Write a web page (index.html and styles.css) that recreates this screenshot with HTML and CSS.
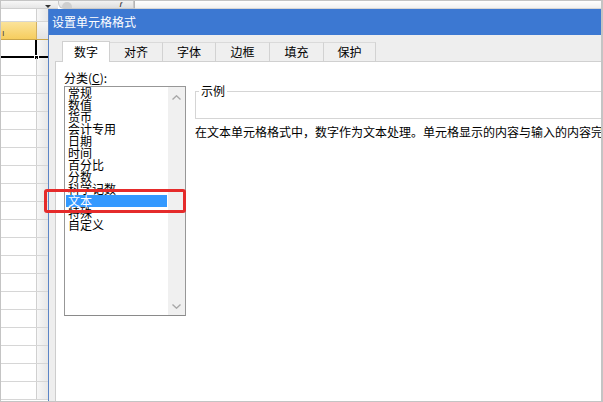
FILE: index.html
```html
<!DOCTYPE html>
<html lang="zh-CN">
<head>
<meta charset="utf-8">
<title>设置单元格格式</title>
<link rel="stylesheet" href="styles.css">
</head>
<body>
<div class="screen">
  <div class="topbar">
    <div class="namebox"><span class="drop"></span></div>
    <div class="fxbox"><span class="dot"></span><span class="fx">f</span></div>
    <div class="formula"></div>
  </div>
  <div class="main">
    <div class="sheet">
      <div class="row r0"><div class="ca"></div><div class="cb"></div></div>
      <div class="row hdr"><div class="ca"><span class="colmark">ı</span></div><div class="cb"></div></div>
      <div class="row act"><div class="ca"><span class="handle"></span></div><div class="cb"></div></div>
      <div class="row"><div class="ca"></div><div class="cb"></div></div>
      <div class="row"><div class="ca"></div><div class="cb"></div></div>
      <div class="row"><div class="ca"></div><div class="cb"></div></div>
      <div class="row"><div class="ca"></div><div class="cb"></div></div>
      <div class="row"><div class="ca"></div><div class="cb"></div></div>
      <div class="row"><div class="ca"></div><div class="cb"></div></div>
      <div class="row"><div class="ca"></div><div class="cb"></div></div>
      <div class="row"><div class="ca"></div><div class="cb"></div></div>
      <div class="row"><div class="ca"></div><div class="cb"></div></div>
      <div class="row"><div class="ca"></div><div class="cb"></div></div>
      <div class="row"><div class="ca"></div><div class="cb"></div></div>
      <div class="row"><div class="ca"></div><div class="cb"></div></div>
      <div class="row"><div class="ca"></div><div class="cb"></div></div>
      <div class="row"><div class="ca"></div><div class="cb"></div></div>
      <div class="row"><div class="ca"></div><div class="cb"></div></div>
      <div class="row"><div class="ca"></div><div class="cb"></div></div>
      <div class="row"><div class="ca"></div><div class="cb"></div></div>
      <div class="row"><div class="ca"></div><div class="cb"></div></div>
      <div class="row"><div class="ca"></div><div class="cb"></div></div>
    </div>
    <div class="dialog">
      <div class="titlebar">设置单元格格式</div>
      <div class="dbody">
        <div class="tabs">
          <div class="tab active">数字</div>
          <div class="tab w53">对齐</div>
          <div class="tab w53">字体</div>
          <div class="tab w54">边框</div>
          <div class="tab w54">填充</div>
          <div class="tab w52">保护</div>
        </div>
        <div class="panel">
          <div class="leftcol">
            <div class="lbl">分类(<u>C</u>):</div>
            <div class="listbox">
              <ul class="items">
                <li>常规</li>
                <li>数值</li>
                <li>货币</li>
                <li>会计专用</li>
                <li>日期</li>
                <li>时间</li>
                <li>百分比</li>
                <li>分数</li>
                <li>科学记数</li>
                <li class="sel">文本</li>
                <li>特殊</li>
                <li>自定义</li>
              </ul>
              <div class="scroll">
                <svg class="chev" width="9" height="5" viewBox="0 0 9 5"><polyline points="0.5,4.5 4.5,0.8 8.5,4.5" fill="none" stroke="#a8a8a8" stroke-width="1.4"/></svg>
                <svg class="chev" width="9" height="5" viewBox="0 0 9 5"><polyline points="0.5,0.5 4.5,4.2 8.5,0.5" fill="none" stroke="#a8a8a8" stroke-width="1.4"/></svg>
              </div>
            </div>
          </div>
          <div class="rightcol">
            <fieldset class="sample"><legend>示例</legend><div class="sample-in"></div></fieldset>
            <p class="desc">在文本单元格格式中，数字作为文本处理。单元格显示的内容与输入的内容完全一致。</p>
          </div>
        </div>
      </div>
    </div>
  </div>
  <div class="highlight"></div>
</div>
</body>
</html>
```

FILE: styles.css
```css
* { box-sizing: border-box; }
html, body { margin: 0; padding: 0; background: #fff; }
body {
  font-family: "Noto Sans CJK SC", "Liberation Sans", sans-serif;
  font-size: 12px;
  color: #000;
}
.screen {
  position: relative;
  width: 603px;
  height: 402px;
  border: 1px solid #c4c4c4;
  border-right-width: 2px;
  overflow: hidden;
  display: flex;
  flex-direction: column;
}
/* top strip */
.topbar {
  height: 8px;
  display: flex;
  flex: none;
}
.namebox {
  width: 57px;
  background: linear-gradient(#f7f7f7, #e6e6e6);
  border-bottom: 1px solid #cfcfcf;
  display: flex;
  justify-content: flex-end;
  align-items: flex-end;
  padding-right: 7px;
}
.drop {
  width: 0; height: 0;
  border-left: 3px solid transparent;
  border-right: 3px solid transparent;
  border-top: 3px solid #333;
}
.fxbox {
  width: 76px;
  border: 1px solid #c8c8c8;
  border-top: none;
  border-radius: 0 0 0 6px;
  background: linear-gradient(#f2f2f2, #dedede);
  display: flex;
  align-items: center;
  padding-left: 3px;
  overflow: hidden;
}
.dot {
  width: 10px; height: 10px;
  border-radius: 50%;
  background: #cfcfcf;
  margin-top: 4px;
}
.fx {
  margin-left: auto;
  margin-right: 11px;
  font-family: "Liberation Serif", serif;
  font-style: italic;
  font-weight: bold;
  font-size: 7px;
  line-height: 7px;
  color: #333;
}
.formula {
  flex: 1;
  border-left: 1px solid #b5b5b5;
  background: linear-gradient(#ffffff, #f1f1f1);
  border-bottom: 1px solid #d5d5d5;
}
/* main */
.main {
  flex: 1;
  display: flex;
  min-height: 0;
}
.sheet {
  width: 47px;
  flex: none;
  display: flex;
  flex-direction: column;
  overflow: hidden;
}
.row {
  height: 18px;
  flex: none;
  display: flex;
  border-bottom: 1px solid #d6d6d6;
}
.row.r0 { height: 13px; }
.ca {
  width: 36px;
  border-right: 1px solid #d0d0d0;
  position: relative;
}
.cb {
  flex: 1;
  background: linear-gradient(90deg, #f7f7f7, #e7e7e7);
}
.hdr { border-bottom-color: #c9a54a; }
.hdr .ca {
  background: linear-gradient(#fbe39a, #f6cd5e);
  border-right-color: #d2b060;
}
.hdr .cb { background: linear-gradient(#f5f5f5, #e2e2e2); }
.colmark {
  font-size: 9px;
  line-height: 18px;
  padding-left: 1px;
  color: #444;
}
.act { border-bottom: 2px solid #000; }
.act .ca { border-right: 2px solid #000; }
.handle {
  position: absolute;
  right: -4px;
  bottom: -4px;
  width: 5px;
  height: 5px;
  background: #000;
  border: 1px solid #fff;
}
/* dialog */
.dialog {
  flex: 1;
  min-width: 0;
  display: flex;
  flex-direction: column;
  border-left: 1px solid #5b84c6;
  overflow: hidden;
}
.titlebar {
  height: 26px;
  flex: none;
  background: #3c78d2;
  color: #fff;
  line-height: 26px;
  padding-left: 3px;
  font-size: 12px;
}
.dbody {
  flex: 1;
  background: #eeeeee;
  padding-left: 6px;
  display: flex;
  flex-direction: column;
  min-height: 0;
}
.tabs {
  height: 26px;
  flex: none;
  display: flex;
  align-items: flex-end;
  padding-left: 7px;
  position: relative;
  z-index: 1;
}
.tab {
  height: 19px;
  line-height: 18px;
  text-align: center;
  background: #efefef;
  border-top: 1px solid #dadada;
  border-right: 1px solid #d2d2d2;
  font-size: 12px;
}
.tab.active {
  width: 48px;
  height: 21px;
  margin-bottom: -1px;
  background: #fff;
  border: 1px solid #d0d0d0;
  border-bottom: none;
  line-height: 20px;
}
.w52 { width: 52px; }
.w53 { width: 53px; }
.w54 { width: 54px; }
.panel {
  flex: 1;
  background: #fff;
  border-top: 1px solid #d0d0d0;
  border-left: 1px solid #cdcdcd;
  display: flex;
  padding: 8px 0 0 8px;
  min-height: 0;
}
.leftcol {
  width: 122px;
  flex: none;
}
.lbl {
  height: 16px;
  line-height: 16px;
}
.lbl u { text-decoration: underline; }
.listbox {
  height: 230px;
  border: 1px solid #979797;
  border-bottom-color: #8a8a8a;
  display: flex;
}
.items {
  flex: 1;
  list-style: none;
  margin: 0;
  padding: 0;
}
.items li {
  height: 12px;
  line-height: 12px;
  font-size: 12px;
  margin: 0 1px;
  padding-left: 2px;
  white-space: nowrap;
}
.items li.sel {
  background: #3399ff;
  color: #fff;
}
.scroll {
  width: 17px;
  flex: none;
  background: #f0f0f0;
  display: flex;
  flex-direction: column;
  justify-content: space-between;
  align-items: center;
  padding: 8px 0 6px;
}
.chev { display: block; }
.rightcol {
  width: 520px;
  flex: none;
  margin-left: 9px;
}
.sample {
  margin: 14px 0 0 0;
  padding: 0;
  border: 1px solid #d5d5d5;
  min-width: 0;
}
.sample legend {
  font-size: 12px;
  line-height: 14px;
  padding: 0 2px;
  margin-left: 3px;
}
.sample-in { height: 20px; }
.desc {
  margin: 6px 0 0 0;
  font-size: 12px;
  line-height: 14px;
  white-space: nowrap;
}
/* annotation overlay */
.highlight {
  position: absolute;
  left: 43px;
  top: 188px;
  width: 142px;
  height: 24px;
  border: 3px solid #e52b2b;
  border-radius: 3px;
}
```
